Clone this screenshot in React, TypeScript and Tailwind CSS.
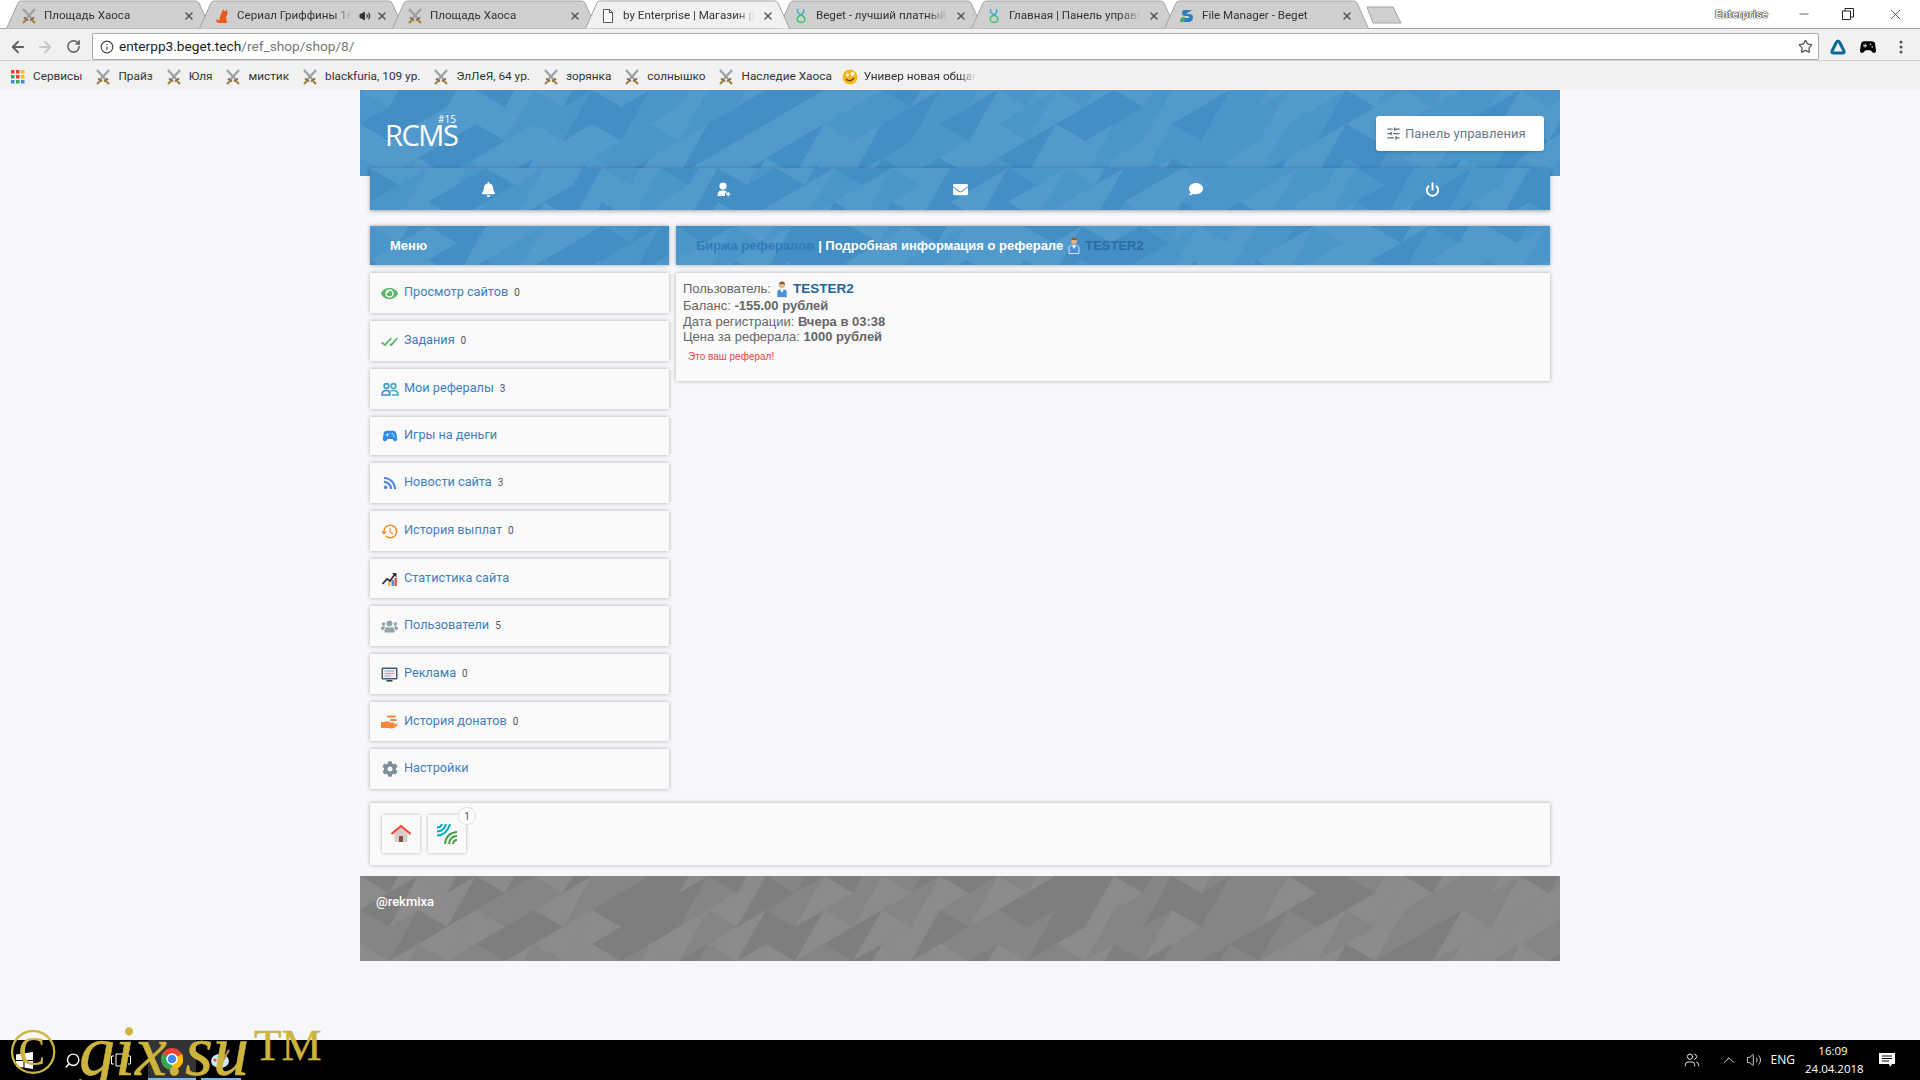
import React from 'react';
import { ArrowLeft, ArrowRight, RotateCw, Star, Power, Info, X, Minus, SlidersHorizontal, Search, ChevronUp, Volume2, Users } from 'lucide-react';
import { FaBell, FaEnvelope, FaComment, FaEye, FaRss, FaUsers, FaCog } from 'react-icons/fa';
import { BiCheckDouble } from 'react-icons/bi';
import { MdSportsEsports, MdHistory } from 'react-icons/md';

const tabs = [
  { title: 'Площадь Хаоса', icon: 'swords' },
  { title: 'Сериал Гриффины 16', icon: 'cat', sound: true },
  { title: 'Площадь Хаоса', icon: 'swords' },
  { title: 'by Enterprise | Магазин рефералов', icon: 'doc', active: true },
  { title: 'Beget - лучший платный хостинг', icon: 'beget' },
  { title: 'Главная | Панель управления', icon: 'beget' },
  { title: 'File Manager - Beget', icon: 'file' },
];

const bookmarks = ['Прайз', 'Юля', 'мистик', 'blackfuria, 109 ур.', 'ЭлЛеЯ, 64 ур.', 'зорянка', 'солнышко', 'Наследие Хаоса'];

const PeopleIcon = () => (
  <svg width="18" height="14" viewBox="0 0 18 14" fill="none" strokeWidth="1.6">
    <circle cx="5.5" cy="4" r="2.4" stroke="#3f9ad8" />
    <circle cx="12.5" cy="4" r="2.4" stroke="#3fb0c8" />
    <path d="M1 13 Q1 8.5 5.5 8.5 Q9 8.5 9 13 Z" stroke="#3f8ad8" />
    <path d="M9.5 9 Q10.5 8.5 12.5 8.5 Q17 8.5 17 13 H11" stroke="#3fb0c8" />
  </svg>
);

const StatsIcon = () => (
  <svg width="15" height="14" viewBox="0 0 15 14">
    <rect x="6" y="10" width="2.4" height="4" fill="#f6b73c" />
    <rect x="9.5" y="8" width="2.4" height="6" fill="#4a90d9" />
    <rect x="12.5" y="6" width="2.4" height="8" fill="#e5533d" />
    <path d="M0.5 12 L5 7 L8 9 L13 2" fill="none" stroke="#333" strokeWidth="1.8" />
    <path d="M10 1 H14.5 V5.5 Z" fill="#333" />
  </svg>
);

const AdIcon = () => (
  <svg width="17" height="15" viewBox="0 0 17 15">
    <rect x="0.5" y="0.5" width="16" height="12" rx="1" fill="#4a5a66" />
    <rect x="2" y="2" width="13" height="9" fill="#eef2f6" />
    <path d="M3.5 4 H13.5" stroke="#7fb6e8" strokeWidth="1.2" />
    <path d="M3.5 6.5 H13.5" stroke="#f08a9a" strokeWidth="1.2" />
    <path d="M3.5 9 H10" stroke="#7fb6e8" strokeWidth="1.2" />
    <rect x="5.5" y="13" width="6" height="1.6" fill="#37474f" />
  </svg>
);

const HandIcon = () => (
  <svg width="17" height="14" viewBox="0 0 17 14">
    <rect x="6" y="0.5" width="9" height="2" rx="1" fill="#f58a3c" />
    <rect x="9" y="4" width="7" height="2" rx="1" fill="#f58a3c" />
    <path d="M0 7 H3 Q7 5.5 9 7.5 H13 Q14.5 8 13 9.5 H8 H14 L16.5 8 Q17 10 14 12.5 Q11 14 7 13 H0 Z" fill="#f58a3c" />
  </svg>
);

const menu = [
  { label: 'Просмотр сайтов', count: '0', h: 'h-[40px]', icon: <FaEye className="text-[#5cb563] text-[17px]" /> },
  { label: 'Задания', count: '0', h: 'h-[40px]', icon: <BiCheckDouble className="text-[#5cb563] text-[21px]" /> },
  { label: 'Мои рефералы', count: '3', h: 'h-[40px]', icon: <PeopleIcon /> },
  { label: 'Игры на деньги', h: 'h-[38px]', icon: <MdSportsEsports className="text-[#2f8ff0] text-[18px]" /> },
  { label: 'Новости сайта', count: '3', h: 'h-[40px]', icon: <FaRss className="text-[#4f86ec] text-[14px]" /> },
  { label: 'История выплат', count: '0', h: 'h-[40px]', icon: <MdHistory className="text-[#f58a2c] text-[19px]" /> },
  { label: 'Статистика сайта', h: 'h-[39px]', icon: <StatsIcon /> },
  { label: 'Пользователи', count: '5', h: 'h-[40px]', icon: <FaUsers className="text-[#8fa3ad] text-[17px]" /> },
  { label: 'Реклама', count: '0', h: 'h-[40px]', icon: <AdIcon /> },
  { label: 'История донатов', count: '0', h: 'h-[39px]', icon: <HandIcon /> },
  { label: 'Настройки', h: 'h-[40px]', icon: <FaCog className="text-[#7d8f99] text-[16px]" /> },
];

const Swords = () => (
  <svg width="16" height="16" viewBox="0 0 16 16" className="shrink-0">
    <path d="M2 1 L11 11 M14 1 L5 11" stroke="#9aa0a6" strokeWidth="2.2" />
    <path d="M9 12.5 L13 9.5 M3 9.5 L7 12.5" stroke="#8a6a3a" strokeWidth="1.6" />
    <path d="M11 12 L14 15 M5 12 L2 15" stroke="#a57c3c" strokeWidth="2" />
  </svg>
);

const Favicon = ({ name }: { name: string }) => {
  if (name === 'swords') return <Swords />;
  if (name === 'cat') return (
    <svg width="16" height="16" viewBox="0 0 16 16" className="shrink-0">
      <path d="M9 1 L10 3 L12 3 L13 1 L13.5 6 L12 9 L13 15 L4 15 L2 13 L3 11 L5 13 L6 9 Z" fill="#e8591c" />
    </svg>
  );
  if (name === 'doc') return (
    <svg width="16" height="16" viewBox="0 0 16 16" className="shrink-0">
      <path d="M3.5 1.5 H9.5 L12.5 4.5 V14.5 H3.5 Z M9.5 1.5 V4.5 H12.5" fill="#fff" stroke="#555" />
    </svg>
  );
  if (name === 'beget') return (
    <svg width="16" height="16" viewBox="0 0 16 16" className="shrink-0">
      <path d="M5 1 Q3 4 8 7 Q12 4 10.5 1" fill="none" stroke="#35a8e0" strokeWidth="1.4" />
      <path d="M8 7 Q3 9 4.5 13 Q8 16 11.5 13 Q13 9 8 7" fill="none" stroke="#3cc46a" strokeWidth="1.4" />
    </svg>
  );
  return (
    <svg width="16" height="16" viewBox="0 0 16 16" className="shrink-0">
      <path d="M13 2 H6 Q3 2 3 5 Q3 8 6 8 H9 Q10 8 10 9 Q10 10 9 10 H2 L1 14 H9 Q14 14 14 9 Q14 6 10 6 H7 Z" fill="#2b7fc4" />
      <path d="M1 14 L3 9 H6 L5 14 Z" fill="#45b35a" />
    </svg>
  );
};

const Tab = ({ tab }: { tab: (typeof tabs)[number] }) => (
  <div className={`relative w-[205px] h-[28px] -mr-[12px] shrink-0 flex items-center pl-[15px] pr-[16px] ${tab.active ? 'z-10' : ''}`}>
    <svg className="absolute inset-0" width="205" height="29" viewBox="0 0 205 29">
      <path d="M0.5 28.5 L12 3 Q13 1 15.5 1 L189.5 1 Q192 1 193 3 L204.5 28.5" fill={tab.active ? '#f1f1f1' : '#cfcfcf'} stroke="#a3a3a3" />
    </svg>
    <div className="relative flex items-center gap-[7px] w-full mt-[4px]">
      <Favicon name={tab.icon} />
      <span className="flex-1 min-w-0 whitespace-nowrap overflow-hidden text-[11.6px] text-[#333] [mask-image:linear-gradient(to_right,black_85%,transparent)]">{tab.title}</span>
      {tab.sound && <Volume2 size={12} className="text-[#333] -mr-[2px] shrink-0" fill="#333" />}
      <X size={12} strokeWidth={3} className="text-[#555] shrink-0" />
    </div>
  </div>
);

// low-poly background of the header, panels and footer
const Poly = ({ width, height, dark, darkOpacity = 0.17, seed = 1 }: { width: number; height: number; dark: string; darkOpacity?: number; seed?: number }) => {
  const cells: React.ReactNode[] = [];
  const shade = (a: number, b: number) => {
    const v = Math.sin(a * 12.9898 + b * 78.233 + seed * 37.7) * 43758.5453;
    return v - Math.floor(v);
  };
  for (let i = -1; i < width / 29 + 1; i++) {
    const xL = i * 29;
    const xR = xL + 29;
    const oL = i % 2 === 0 ? 0 : 17;
    const oR = i % 2 === 0 ? 17 : 0;
    for (let k = -1; k < height / 34 + 1; k++) {
      const t1 = `${xL},${34 * k + oL} ${xR},${34 * k + oR} ${xL},${34 * (k + 1) + oL}`;
      const t2 = `${xR},${34 * k + oR} ${xL},${34 * (k + 1) + oL} ${xR},${34 * (k + 1) + oR}`;
      [t1, t2].forEach((pts, n) => {
        // the two triangles on one vertical edge share a shade, which gives the diamonds
        const s = shade(i + n, k);
        if (s > 0.6) cells.push(<polygon key={`${i}-${k}-${n}`} points={pts} fill="#ffffff" fillOpacity={0.05} />);
        else if (s < 0.3) cells.push(<polygon key={`${i}-${k}-${n}`} points={pts} fill={dark} fillOpacity={darkOpacity} />);
      });
    }
  }
  return (
    <svg className="absolute inset-0" width={width} height={height} viewBox={`0 0 ${width} ${height}`}>
      {cells}
    </svg>
  );
};

const TesterIcon = () => (
  <svg width="12" height="17" viewBox="0 0 12 17" className="shrink-0">
    <path d="M1 16.5 V11 Q1 8 6 8 Q11 8 11 11 V16.5 Z" fill="#4a8fd8" stroke="#e4f0fa" strokeWidth="0.9" />
    <circle cx="6" cy="4" r="3" fill="#e0b48c" />
    <path d="M3 4 Q3 0.5 6 0.5 Q9 0.5 9 4 L8 3 H4 Z" fill="#8a5a2c" />
    <path d="M4 8.5 L6 12 L8 8.5 Z" fill="#fff" />
  </svg>
);

const MenuItem = ({ item }: { item: (typeof menu)[number] }) => (
  <div className={`${item.h} bg-[#fafafa] shadow-[0_0_4px_rgba(0,0,0,0.3)] flex items-center`}>
    <div className="w-[34px] pl-[5px] flex justify-center shrink-0">{item.icon}</div>
    <span className="text-[#3f7fbf] text-[12.7px] -mt-[2px]">{item.label}</span>
    {item.count && <span className="text-[#555] text-[10px] ml-[6px] -mt-[1px]">{item.count}</span>}
  </div>
);

export default function App() {
  return (
    <div className="relative w-[1920px] h-[1080px] overflow-hidden flex flex-col bg-[#f5f7fa] font-['Roboto',sans-serif]">
      {/* browser chrome */}
      <div className="h-[90px] shrink-0 flex flex-col bg-[#f1f1f1]">
        <div className="h-[29px] bg-white border-b border-[#a3a3a3] flex pl-[6px] items-end relative">
          {tabs.map((tab, i) => <Tab key={i} tab={tab} />)}
          <svg width="36" height="18" viewBox="0 0 36 18" className="ml-[9px] mb-[4px] shrink-0">
            <path d="M1 1 H27 L35 17 H7 Z" fill="#cfcfcf" stroke="#a3a3a3" />
          </svg>
          <div className="ml-auto flex items-center h-[28px] self-start text-[#222]">
            <span className="text-[11.5px] text-white font-semibold [text-shadow:0_0_1px_#000,0_0_1px_#000,0_0_1px_#000] mr-[29px] mt-[2px]">Enterprise</span>
            <Minus size={14} strokeWidth={1.2} className="mr-[31px]" />
            <svg width="12" height="12" viewBox="0 0 12 12" className="mr-[33px]"><path d="M0.5 3 H8.5 V11.5 H0.5 Z M3 3 V0.5 H11.5 V9 H8.5" fill="none" stroke="#222" /></svg>
            <X size={17} strokeWidth={1} className="mr-[16px]" />
          </div>
        </div>
        <div className="h-[32px] flex items-center pl-[9px] pr-[13px] pt-[4px] border-b border-[#d0d0d0]">
          <ArrowLeft size={18} strokeWidth={2.5} className="text-[#5f6368]" />
          <ArrowRight size={18} strokeWidth={2.5} className="text-[#c8c8c8] ml-[9px]" />
          <RotateCw size={15} strokeWidth={2.5} className="text-[#5f6368] ml-[12px]" />
          <div className="ml-[11px] w-[1727px] h-[27px] bg-white border border-[#ababab] rounded-[2px] flex items-center pl-[7px] pr-[5px]">
            <Info size={14} className="text-[#444]" />
            <span className="ml-[5px] text-[13.7px] text-[#222]">enterpp3.beget.tech<span className="text-[#777]">/ref_shop/shop/8/</span></span>
            <Star size={15} className="ml-auto text-[#555]" />
          </div>
          <svg width="20" height="18" viewBox="0 0 20 18" className="ml-[9px]"><path d="M10 3 Q11 3 12 5 L16 13 Q16.5 15 14.5 15 H5.5 Q3.5 15 4 13 L8 5 Q9 3 10 3 Z" fill="none" stroke="#0b6a94" strokeWidth="3" /></svg>
          <MdSportsEsports className="ml-[10px] text-[20px] text-black" />
          <svg width="4" height="14" viewBox="0 0 4 14" className="ml-[21px]"><circle cx="2" cy="2" r="1.5" fill="#555" /><circle cx="2" cy="7" r="1.5" fill="#555" /><circle cx="2" cy="12" r="1.5" fill="#555" /></svg>
        </div>
        <div className="flex-1 flex items-center pl-[11px] pt-[2px] text-[11.8px] text-[#333]">
          <svg width="14" height="14" viewBox="0 0 14 14" className="shrink-0">
            {['#ea4335', '#ea4335', '#fbbc05', '#34a853', '#ea4335', '#fbbc05', '#4285f4', '#34a853', '#4285f4'].map((c, i) => (
              <rect key={i} x={(i % 3) * 5} y={Math.floor(i / 3) * 5} width="3.5" height="3.5" fill={c} />
            ))}
          </svg>
          <span className="ml-[8px]">Сервисы</span>
          {bookmarks.map((b, i) => (
            <div key={i} className="flex items-center gap-[7px] ml-[13px]">
              <Swords />
              <span className="whitespace-nowrap">{b}</span>
            </div>
          ))}
          <div className="flex items-center gap-[6px] ml-[10px]">
            <svg width="16" height="16" viewBox="0 0 16 16" className="shrink-0">
              <circle cx="8" cy="8" r="7.5" fill="#f5b71a" />
              <circle cx="5.5" cy="6" r="1.6" fill="#fff" /><circle cx="10.5" cy="5" r="2" fill="#fff" />
              <path d="M4 10 Q8 14 12 9" stroke="#7a4a0a" strokeWidth="1.4" fill="none" />
            </svg>
            <span className="whitespace-nowrap w-[112px] overflow-hidden [mask-image:linear-gradient(to_right,black_85%,transparent)]">Универ новая общага</span>
          </div>
        </div>
      </div>

      {/* page */}
      <div className="flex-1 min-h-0 flex justify-center">
        <div className="w-[1200px] flex flex-col">
          <header className="relative h-[86px] shrink-0 bg-[#4a95ca] overflow-hidden">
            <Poly width={1200} height={86} dark="#1f6fab" seed={3} />
            <div className="relative h-full flex justify-between pl-[25px] pr-[16px] pt-[26px]">
              <div className="relative text-white leading-none">
                <span className="absolute left-[53px] -top-[2px] text-[10px] font-['Open_Sans',sans-serif]">#15</span>
                <span className="block mt-[4px] text-[29px] tracking-[-1.4px] font-['Open_Sans',sans-serif]">RCMS</span>
              </div>
              <div className="w-[168px] h-[35px] bg-white rounded-[3px] flex items-center pl-[10px] gap-[4px] text-[13px] text-[#6c7a86] shadow-[0_1px_3px_rgba(0,0,0,0.2)]">
                <SlidersHorizontal size={15} className="text-[#5f6e78]" />
                Панель управления
              </div>
            </div>
          </header>

          <nav className="relative mx-[10px] -mt-[8px] h-[42px] shrink-0 bg-[#4a95ca] overflow-hidden shadow-[0_1px_4px_rgba(0,0,0,0.35)]">
            <Poly width={1180} height={42} dark="#1f6fab" seed={7} />
            <div className="relative h-full grid grid-cols-5 text-white">
              <div className="flex items-center justify-center"><FaBell className="text-[15px]" /></div>
              <div className="flex items-center justify-center">
                <svg width="14" height="15" viewBox="0 0 14 15" fill="#fff">
                  <circle cx="6" cy="4" r="3.6" />
                  <path d="M0.5 14 Q0.5 9 4 8.5 H8 Q9 8.8 9.6 9.5 V11 H8 V14 Z" />
                  <path d="M9 12.2 H13.5 M11.2 10 V14.5" stroke="#fff" strokeWidth="1.2" />
                </svg>
              </div>
              <div className="flex items-center justify-center"><FaEnvelope className="text-[15px]" /></div>
              <div className="flex items-center justify-center"><FaComment className="text-[14px]" /></div>
              <div className="flex items-center justify-center"><Power size={15} strokeWidth={3} /></div>
            </div>
          </nav>

          <div className="mx-[10px] mt-[16px] flex gap-[7px] items-start">
            <aside className="w-[299px] shrink-0 flex flex-col gap-[8px]">
              <div className="relative h-[39px] bg-[#4a95ca] overflow-hidden shadow-[0_0_4px_rgba(0,0,0,0.35)]">
                <Poly width={299} height={39} dark="#1f6fab" seed={11} />
                <div className="relative h-full flex items-center pl-[20px] text-white text-[13px] font-bold font-['Liberation_Sans',sans-serif]">Меню</div>
              </div>
              {menu.map((item, i) => <MenuItem key={i} item={item} />)}
            </aside>
            <section className="flex-1 flex flex-col gap-[8px]">
              <div className="relative h-[39px] bg-[#4a95ca] overflow-hidden shadow-[0_0_4px_rgba(0,0,0,0.35)]">
                <Poly width={874} height={39} dark="#1f6fab" seed={5} />
                <div className="relative h-full flex items-center pl-[20px] gap-[4px] text-[13px] font-bold text-white font-['Liberation_Sans',sans-serif]">
                  <span className="text-[#2f7cb9]">Биржа рефералов</span>
                  <span>| Подробная информация о реферале</span>
                  <span className="mx-[1px] flex items-center"><TesterIcon /></span>
                  <span className="text-[#2a6c9f]">TESTER2</span>
                </div>
              </div>
              <div className="h-[108px] bg-[#fafafa] shadow-[0_0_4px_rgba(0,0,0,0.3)] pl-[7px] pt-[7px] text-[13px] leading-[15.7px] text-[#666] font-['Liberation_Sans',sans-serif]">
                <div className="flex items-center gap-[5px] h-[18px]">
                  Пользователь: <TesterIcon /><b className="text-[13.5px] text-[#2a6496]">TESTER2</b>
                </div>
                <div>Баланс: <b>-155.00 рублей</b></div>
                <div>Дата регистрации: <b>Вчера в 03:38</b></div>
                <div>Цена за реферала: <b>1000 рублей</b></div>
                <div className="mt-[4px] ml-[5px] text-[10px] text-[#e8454a]">Это ваш реферал!</div>
              </div>
            </section>
          </div>

          <div className="mx-[10px] mt-[14px] h-[62px] shrink-0 bg-[#fafafa] shadow-[0_0_4px_rgba(0,0,0,0.3)] flex items-center pl-[12px] gap-[8px]">
            <div className="w-[38px] h-[38px] bg-[#fafafa] shadow-[0_0_3px_rgba(0,0,0,0.3)] flex items-center justify-center">
              <svg width="20" height="18" viewBox="0 0 20 18">
                <path d="M3.5 8 L10 2 L16.5 8 V17 H3.5 Z" fill="#d7ccc8" />
                <path d="M0.5 9 L10 1 L19.5 9" fill="none" stroke="#f44336" strokeWidth="2" />
                <rect x="8" y="11" width="4" height="6" fill="#795548" />
              </svg>
            </div>
            <div className="relative w-[38px] h-[38px] bg-[#fafafa] shadow-[0_0_3px_rgba(0,0,0,0.3)] flex items-center justify-center">
              <svg width="20" height="20" viewBox="0 0 20 20" fill="none" strokeWidth="2">
                <path d="M0 3.5 Q4 3.5 5 0 M0 7.5 Q7 7.5 9 0 M0 11.5 Q10 11 13 0" stroke="#00acc1" />
                <path d="M20 8 Q9 9 8 20 M20 12 Q13 12 12 20 M20 16 Q16.5 16 16 20" stroke="#43a047" />
              </svg>
              <span className="absolute -top-[8px] -right-[10px] w-[18px] h-[18px] rounded-full bg-white border border-[#ddd] flex items-center justify-center text-[10px] text-[#555]">1</span>
            </div>
          </div>

          <footer className="relative mt-[11px] h-[85px] shrink-0 bg-[#858585] overflow-hidden">
            <Poly width={1200} height={85} dark="#333333" darkOpacity={0.09} seed={9} />
            <div className="relative pl-[16px] pt-[16px] text-[13px] font-medium text-white">@rekmixa</div>
          </footer>
        </div>
      </div>

      {/* taskbar */}
      <div className="h-[40px] shrink-0 bg-black flex items-center text-white">
        <svg width="17" height="17" viewBox="0 0 17 17" className="ml-[16px]" fill="#fff">
          <path d="M0 2.5 L7.5 1.4 V8 H0 Z M8.5 1.2 L17 0 V8 H8.5 Z M0 9 H7.5 V15.6 L0 14.5 Z M8.5 9 H17 V17 L8.5 15.8 Z" />
        </svg>
        <Search size={17} className="ml-[31px] -scale-x-100" />
        <svg width="20" height="14" viewBox="0 0 20 14" className="ml-[30px]" fill="none" stroke="#fff"><path d="M5 1 H15 V13 H5 Z M3 3 H0.5 V11 H3 M17 3 H19.5 V11 H17" /></svg>
        <div className="ml-[17px] w-[48px] h-[40px] bg-[#333] border-b-[2px] border-[#76b9ed] flex items-center justify-center">
          <svg width="22" height="22" viewBox="0 0 22 22">
            <circle cx="11" cy="11" r="11" fill="#ea4335" />
            <path d="M11 11 L1.5 5.5 A11 11 0 0 0 11 22 Z" fill="#34a853" />
            <path d="M11 11 L11 22 A11 11 0 0 0 21 6 Z" fill="#fbbc05" />
            <circle cx="11" cy="11" r="5" fill="#4285f4" stroke="#fff" strokeWidth="1.5" />
          </svg>
        </div>
        <div className="ml-[5px] w-[40px] h-[40px] border-b-[2px] border-[#76b9ed] flex items-center justify-center">
          <svg width="22" height="22" viewBox="0 0 22 22">
            <ellipse cx="10" cy="13" rx="9" ry="7" fill="#cfe8f5" />
            <circle cx="5" cy="12" r="1.6" fill="#e5533d" /><circle cx="9" cy="9" r="1.6" fill="#58b368" />
            <path d="M12 14 L19 2" stroke="#b5835a" strokeWidth="2.4" />
          </svg>
        </div>
        <div className="ml-auto flex items-center">
          <Users size={16} strokeWidth={1.3} />
          <ChevronUp size={18} strokeWidth={1.2} className="ml-[20px]" />
          <Volume2 size={16} strokeWidth={1.2} className="ml-[8px]" />
          <span className="ml-[9px] text-[12px] font-['Open_Sans',sans-serif]">ENG</span>
          <div className="ml-[10px] w-[56px] text-center text-[11.5px] leading-[18px] font-['Open_Sans',sans-serif]">
            <div>16:09</div>
            <div>24.04.2018</div>
          </div>
          <svg width="16" height="15" viewBox="0 0 16 15" className="ml-[18px] mr-[25px]" fill="#fff"><path d="M0 0 H16 V11 H13 L11 14 L10 11 H0 Z" /><path d="M3 3 H13 M3 5.5 H13 M3 8 H10" stroke="#000" /></svg>
        </div>
      </div>

      {/* site watermark over the taskbar */}
      <div className="absolute left-[8px] top-[1024px] h-[56px] w-[330px] overflow-hidden text-[#cdb43c] pointer-events-none font-['Liberation_Serif',serif]">
        <span className="absolute left-0 top-[-6px] text-[66px] leading-[66px]">©</span>
        <span className="absolute left-[71px] top-[-15px] text-[72px] italic leading-[84px] [-webkit-text-stroke:0.5px_#cdb43c]">gix.su</span>
        <span className="absolute left-[246px] top-[-4px] text-[45px] leading-[50px] [-webkit-text-stroke:0.4px_#cdb43c]">TM</span>
      </div>
    </div>
  );
}
